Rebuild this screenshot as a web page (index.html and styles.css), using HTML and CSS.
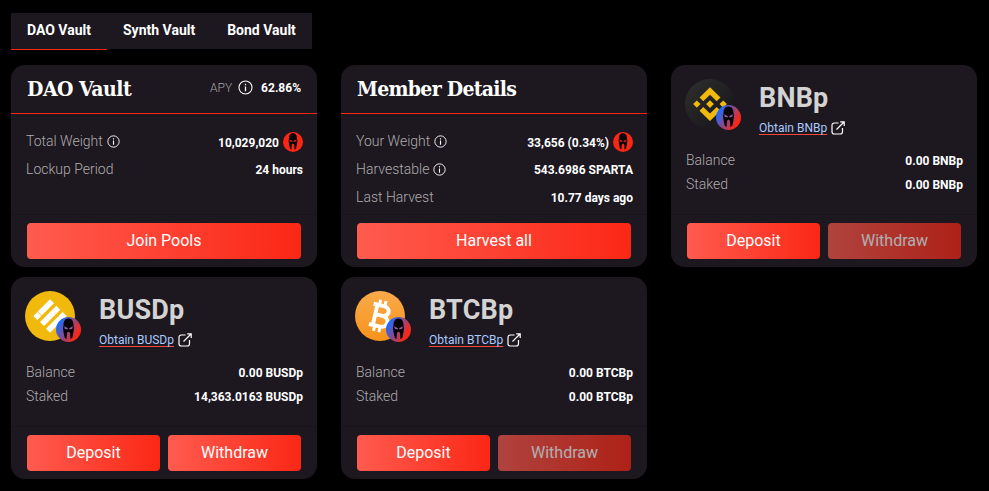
FILE: index.html
```html
<!DOCTYPE html>
<html lang="en">
<head>
<meta charset="utf-8">
<title>DAO Vault</title>
<link rel="stylesheet" href="styles.css">
</head>
<body>
<svg class="defs" aria-hidden="true">
  <defs>
    <linearGradient id="pool" x1="0" y1="0.2" x2="1" y2="0.8"><stop offset="0.1" stop-color="#1c6cff"/><stop offset="0.85" stop-color="#fb2715"/></linearGradient>
    <linearGradient id="btc" x1="0" y1="0" x2="0" y2="1"><stop offset="0" stop-color="#f9aa4b"/><stop offset="1" stop-color="#f7931a"/></linearGradient>
    <linearGradient id="bnb" x1="0" y1="0" x2="1" y2="1"><stop offset="0" stop-color="#2f302f"/><stop offset="0.7" stop-color="#1c1a1d"/></linearGradient>
    <symbol id="info" viewBox="0 0 14 14"><circle cx="7" cy="7" r="6.1" fill="none" stroke="#fff" stroke-width="1"/><path d="M7 6v4.5M7 3.5v1.3" stroke="#fff" stroke-width="1.2"/></symbol>
    <symbol id="helmet" viewBox="0 0 20 20"><path d="M10 1.200C7.200 1.200 6 3.500 6 6.500L5.600 9l.5 3.500.8 3.800 1.500 1.500.4-5.300 1.200-.9 1.200.9.4 5.300 1.500-1.500.8-3.800.5-3.500-.4-2.500C14 3.500 12.800 1.200 10 1.200z" fill="#070207"/><path d="M6.500 7.400l3 1.500-.4 1.100-2.100-.7zM13.500 7.400l-3 1.500.4 1.100 2.100-.7z" fill="currentColor"/></symbol>
    <symbol id="link" viewBox="0 0 14 14"><path d="M7.600 2H3.200A2.200 2.200 0 0 0 1 4.200v6.600A2.200 2.200 0 0 0 3.200 13h6.100a2.200 2.200 0 0 0 2.200-2.200V7M5.500 8.500L13 1M9.200 .8H13.200V5" fill="none" stroke="#fff" stroke-width="1.2"/></symbol>
  </defs>
</svg>
<nav class="tabs">
  <a class="tab active">DAO Vault</a><a class="tab">Synth Vault</a><a class="tab">Bond Vault</a>
</nav>
<main class="grid">
  <section class="card">
    <header class="head"><h2 class="title dao">DAO Vault</h2><div class="apy"><span>APY</span><svg><use href="#info"/></svg><b>62.86%</b></div></header>
    <div class="body">
      <div class="row"><span class="label">Total Weight</span><svg class="info"><use href="#info"/></svg><b>10,029,020</b><svg class="token" viewBox="0 0 20 20"><circle cx="10" cy="10" r="10" fill="#fb2715"/><use href="#helmet"/></svg></div>
      <div class="row"><span class="label">Lockup Period</span><b>24 hours</b></div>
    </div>
    <footer class="foot"><button>Join Pools</button></footer>
  </section>
  <section class="card">
    <header class="head"><h2 class="title member">Member Details</h2></header>
    <div class="body">
      <div class="row"><span class="label">Your Weight</span><svg class="info"><use href="#info"/></svg><b>33,656 (0.34%)</b><svg class="token" viewBox="0 0 20 20"><circle cx="10" cy="10" r="10" fill="#fb2715"/><use href="#helmet"/></svg></div>
      <div class="row"><span class="label">Harvestable</span><svg class="info"><use href="#info"/></svg><b>543.6986 SPARTA</b></div>
      <div class="row"><span class="label">Last Harvest</span><b>10.77 days ago</b></div>
    </div>
    <footer class="foot"><button>Harvest all</button></footer>
  </section>
  <section class="card">
    <div class="pool">
      <div class="coin">
        <svg class="logo" viewBox="0 0 50 50"><circle cx="25" cy="25" r="25" fill="url(#bnb)"/><g fill="#f0b90b"><path d="M25 8.200L35.500 18.500 31.700 22.300 25 15.700 18.300 22.300 14.500 18.500zM25 42L35.500 31.700 31.700 27.900 25 34.500 18.300 27.900 14.500 31.700zM11.800 21.400l3.700 3.700-3.700 3.700-3.700-3.700zM38.200 21.400l3.700 3.700-3.700 3.700-3.700-3.700zM25 21.200l3.900 3.900-3.900 3.900-3.900-3.900z"/></g></svg>
        <svg class="badge" viewBox="0 0 20 20"><circle cx="10" cy="10" r="10" fill="url(#pool)"/><use href="#helmet"/></svg>
      </div>
      <div class="name"><h3>BNBp</h3><div class="obtain"><a>Obtain BNBp</a><svg><use href="#link"/></svg></div></div>
    </div>
    <div class="body compact">
      <div class="row"><span class="label">Balance</span><b>0.00 BNBp</b></div>
      <div class="row"><span class="label">Staked</span><b>0.00 BNBp</b></div>
    </div>
    <footer class="foot"><button>Deposit</button><button disabled>Withdraw</button></footer>
  </section>
  <section class="card">
    <div class="pool">
      <div class="coin">
        <svg class="logo" viewBox="0 0 50 50"><circle cx="25" cy="25" r="25" fill="#f0b90b"/><path d="M25 8.200l4 4L16.700 24.500l-4-4zM12.300 21.100l4 4-4 4-4-4zM31.300 14.700l4 4L19 35l-4-4zM37.700 21.100l4 4L25 41.800l-4-4z" fill="#fff"/></svg>
        <svg class="badge" viewBox="0 0 20 20"><circle cx="10" cy="10" r="10" fill="url(#pool)"/><use href="#helmet"/></svg>
      </div>
      <div class="name"><h3>BUSDp</h3><div class="obtain"><a>Obtain BUSDp</a><svg><use href="#link"/></svg></div></div>
    </div>
    <div class="body compact">
      <div class="row"><span class="label">Balance</span><b>0.00 BUSDp</b></div>
      <div class="row"><span class="label">Staked</span><b>14,363.0163 BUSDp</b></div>
    </div>
    <footer class="foot"><button>Deposit</button><button>Withdraw</button></footer>
  </section>
  <section class="card">
    <div class="pool">
      <div class="coin">
        <svg class="logo" viewBox="0 0 50 50"><circle cx="25" cy="25" r="25" fill="url(#btc)"/><g transform="rotate(13 25 25)" fill="none" stroke="#fff"><path d="M16 14.500h10.500c8 0 8 9.800 0 9.800h-6.500M26.500 24.300c9.500 0 9.500 11 0 11H16M20 14.500v20.500" stroke-width="4"/><path d="M22 9v5M27.500 9v5M22 36v5M27.500 36v5" stroke-width="3"/></g></svg>
        <svg class="badge" viewBox="0 0 20 20"><circle cx="10" cy="10" r="10" fill="url(#pool)"/><use href="#helmet"/></svg>
      </div>
      <div class="name"><h3>BTCBp</h3><div class="obtain"><a>Obtain BTCBp</a><svg><use href="#link"/></svg></div></div>
    </div>
    <div class="body compact">
      <div class="row"><span class="label">Balance</span><b>0.00 BTCBp</b></div>
      <div class="row"><span class="label">Staked</span><b>0.00 BTCBp</b></div>
    </div>
    <footer class="foot"><button>Deposit</button><button disabled>Withdraw</button></footer>
  </section>
</main>
</body>
</html>
```
FILE: styles.css
```css
* { box-sizing: border-box; }
body { margin: 0; padding: 13px 11px 0; background: #000; color: #fff; font-family: Roboto, sans-serif; overflow: hidden; }
svg { flex: none; display: block; }
.defs { position: absolute; width: 0; height: 0; }
.tabs { display: flex; width: 301px; height: 36px; background: #1d171f; }
.tab { height: 37px; padding: 0 16px; font-size: 14px; line-height: 34px; font-weight: 700; border-bottom: 1px solid transparent; white-space: nowrap; }
.tab.active { border-color: #fb2715; }
.grid { display: grid; grid-template-columns: repeat(3, 306px); grid-auto-rows: 202px; gap: 10px 24px; margin-top: 16px; }
.card { display: flex; flex-direction: column; background: #1d171f; border-radius: 14px; overflow: hidden; }
.head { display: flex; justify-content: space-between; height: 49px; padding: 0 16px; border-bottom: 1px solid #fb2715; }
.title { margin: 0; font-family: "DejaVu Serif Condensed", "DejaVu Serif", serif; font-stretch: condensed; font-size: 21px; line-height: 47px; font-weight: 700; white-space: nowrap; }
.title.dao { letter-spacing: -0.5px; }
.title.member { letter-spacing: -0.7px; }
.apy { display: flex; align-items: center; height: 45px; font-size: 12px; }
.apy span { color: #a6a6a6; font-weight: 300; }
.apy svg { width: 15px; height: 15px; margin: 0 8px 0 6px; }
.body { flex: 1; padding: 14px 14px 0 15px; }
.row { display: flex; align-items: center; height: 28px; font-size: 12px; }
.row b { margin-left: auto; padding-top: 1px; font-weight: 700; }
.row b:last-child { padding-top: 0; }
.label { margin-top: -2px; color: #adadad; font-size: 14px; font-weight: 300; }
.info { width: 13px; height: 13px; margin: -2px 0 0 4px; }
.token { width: 20px; height: 20px; margin-left: 4px; color: #fb2715; }
.compact { padding-top: 3px; }
.compact .row { height: 24px; }
.compact .label { margin-top: 0; }
.compact .row b { padding-top: 2px; }
.foot { display: flex; gap: 8px; height: 53px; padding: 8px 16px; border-top: 1px solid #19141b; }
button { flex: 1; height: 36px; padding: 0 0 1px; border: 0; border-radius: 4px; background: linear-gradient(90deg, #ff5b4f, #fb2715); color: #fff; font: 400 16px Roboto, sans-serif; }
button:disabled { opacity: 0.65; }
.pool { display: flex; height: 80px; padding: 14px 14px 0; }
.coin { position: relative; width: 74px; height: 50px; }
.logo { width: 50px; height: 50px; }
.badge { position: absolute; left: 31px; top: 26px; width: 25px; height: 25px; color: #9560a2; }
.name h3 { margin: 0; height: 37px; color: #d3d3d3; font-size: 27px; line-height: 38px; font-weight: 700; letter-spacing: 0.2px; }
.obtain { display: flex; align-items: center; height: 24px; font-size: 12px; }
.obtain a { color: #a9cbff; text-decoration: underline #fb4a3c; text-underline-offset: 2px; }
.obtain svg { width: 14px; height: 14px; margin-left: 4px; }
```
